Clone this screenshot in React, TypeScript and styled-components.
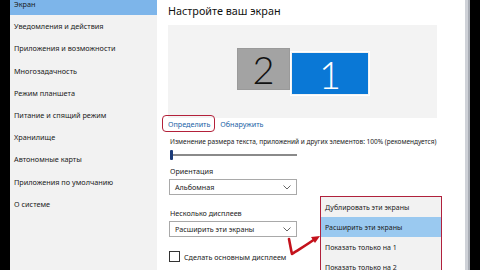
import React from "react";
import styled, { createGlobalStyle } from "styled-components";

const Global = createGlobalStyle`
  html, body { margin: 0; padding: 0; background: #000; }
  body { width: 480px; height: 270px; overflow: hidden; font-family: "Noto Sans", "Open Sans", sans-serif; }
  * { box-sizing: border-box; }
`;

const Screen = styled.div`
  width: 480px;
  height: 270px;
  display: flex;
  position: relative;
  overflow: hidden;
  background: #000;
`;

const Edge = styled.div<{ $w: number }>`
  width: ${(p) => p.$w}px;
  flex: none;
  background: #000;
`;

const Sidebar = styled.nav`
  width: 147px;
  flex: none;
  background: #f2f2f2;
  display: flex;
  flex-direction: column;
`;

const NavItem = styled.div<{ $active?: boolean; $first?: boolean }>`
  height: 22.2px;
  flex: none;
  display: flex;
  align-items: center;
  padding-left: 4px;
  font-size: 7.3px;
  color: #1a1a1a;
  background: ${(p) => (p.$active ? "#7db5ea" : "transparent")};
  margin-top: ${(p) => (p.$first ? "-7px" : "0")};
  white-space: nowrap;
`;

const Main = styled.main`
  flex: 1;
  background: #fff;
  padding-left: 11px;
  display: flex;
  flex-direction: column;
`;

const Title = styled.h1`
  margin: 3px 0 0 0;
  font-size: 10.8px;
  font-weight: 400;
  color: #111;
  height: 16px;
  line-height: 16px;
`;

const Preview = styled.div`
  margin-top: 6px;
  width: 269px;
  height: 93px;
  background: #f3f3f3;
  display: flex;
  justify-content: center;
  align-items: flex-start;
  gap: 2px;
`;

const Monitor = styled.div<{ $primary?: boolean }>`
  display: flex;
  align-items: center;
  justify-content: center;
  width: ${(p) => (p.$primary ? 76 : 53)}px;
  height: ${(p) => (p.$primary ? 41 : 42)}px;
  margin-top: ${(p) => (p.$primary ? 28 : 23)}px;
  background: ${(p) => (p.$primary ? "#0a78d6" : "#a3a3a3")};
  color: ${(p) => (p.$primary ? "#fff" : "#111")};
  border: 1px solid ${(p) => (p.$primary ? "#0a78d6" : "#9a9a9a")};
  outline: ${(p) => (p.$primary ? "1px solid #ffffff" : "none")};
  outline-offset: 1px;
  font-family: Lato, "DejaVu Sans", sans-serif;
  font-weight: 300;
  font-size: 38px;
  line-height: 1;
`;

const LinkRow = styled.div`
  display: flex;
  align-items: center;
  gap: 5px;
  margin-top: -3px;
  margin-left: -6px;
  height: 17px;
`;

const Marked = styled.span`
  display: inline-flex;
  align-items: center;
  height: 17px;
  padding: 0 4px 0 5px;
  border: 1.5px solid #b3213a;
  border-radius: 4px;
`;

const Link = styled.span`
  font-size: 7.2px;
  color: #1a63a6;
  white-space: nowrap;
`;

const Label = styled.div<{ $mt: number; $small?: boolean }>`
  margin-top: ${(p) => p.$mt}px;
  margin-left: 2px;
  font-size: ${(p) => (p.$small ? 6.5 : 7.2)}px;
  color: #222;
  white-space: nowrap;
  height: 10px;
  line-height: 10px;
`;

const Slider = styled.div`
  margin-top: 3px;
  margin-left: 2px;
  width: 127px;
  height: 10px;
  display: flex;
  align-items: center;
  position: relative;
`;

const Track = styled.div`
  flex: 1;
  height: 1.5px;
  background: #8a8a8a;
`;

const Thumb = styled.div`
  position: absolute;
  left: 0;
  top: 0;
  width: 3px;
  height: 10px;
  border-radius: 1px;
  background: #1b3a78;
`;

const Select = styled.div<{ $mt: number }>`
  margin-top: ${(p) => p.$mt}px;
  margin-left: 1px;
  width: 128px;
  height: 16px;
  border: 1px solid #a9a9a9;
  background: #fff;
  display: flex;
  align-items: center;
  justify-content: space-between;
  padding: 0 5px 0 5px;
  font-size: 7.2px;
  color: #222;
`;

const CheckRow = styled.div`
  margin-top: 14px;
  margin-left: 1px;
  display: flex;
  align-items: center;
  gap: 4px;
  font-size: 7.2px;
  color: #222;
`;

const Box = styled.div`
  width: 11px;
  height: 11px;
  border: 1px solid #333;
  background: #fff;
`;

const Scrollbar = styled.div`
  width: 5px;
  flex: none;
  background: #cfd2d8;
  border-right: 2px solid #a9adb5;
`;

const Popup = styled.div`
  position: absolute;
  left: 320px;
  top: 196px;
  width: 122px;
  height: 90px;
  background: #f2f2f2;
  border: 1.5px solid #b0213c;
  display: flex;
  flex-direction: column;
`;

const PopItem = styled.div<{ $sel?: boolean }>`
  height: 20px;
  flex: none;
  display: flex;
  align-items: center;
  padding-left: 4px;
  font-size: 7px;
  color: #1a1a1a;
  white-space: nowrap;
  background: ${(p) => (p.$sel ? "#9ac9f0" : "transparent")};
`;

const ArrowSvg = styled.svg`
  position: absolute;
  left: 282px;
  top: 230px;
  overflow: visible;
`;

const Chevron = () => (
  <svg width="8" height="5" viewBox="0 0 8 5">
    <path d="M0.5 0.5 L4 4 L7.5 0.5" fill="none" stroke="#555" strokeWidth="0.9" />
  </svg>
);

const navItems = [
  "Экран",
  "Уведомления и действия",
  "Приложения и возможности",
  "Многозадачность",
  "Режим планшета",
  "Питание и спящий режим",
  "Хранилище",
  "Автономные карты",
  "Приложения по умолчанию",
  "О системе",
];

const popItems = [
  "Дублировать эти экраны",
  "Расширить эти экраны",
  "Показать только на 1",
  "Показать только на 2",
];

export default function App() {
  return (
    <>
      <Global />
      <Screen>
        <Edge $w={10} />
        <Sidebar>
          {navItems.map((t, i) => (
            <NavItem key={t} $active={i === 0} $first={i === 0}>
              {t}
            </NavItem>
          ))}
        </Sidebar>
        <Main>
          <Title>Настройте ваш экран</Title>
          <Preview>
            <Monitor>2</Monitor>
            <Monitor $primary>1</Monitor>
          </Preview>
          <LinkRow>
            <Marked>
              <Link>Определить</Link>
            </Marked>
            <Link>Обнаружить</Link>
          </LinkRow>
          <Label $mt={5} $small>
            Изменение размера текста, приложений и других элементов: 100% (рекомендуется)
          </Label>
          <Slider>
            <Track />
            <Thumb />
          </Slider>
          <Label $mt={6}>Ориентация</Label>
          <Select $mt={3}>
            <span>Альбомная</span>
            <Chevron />
          </Select>
          <Label $mt={13}>Несколько дисплеев</Label>
          <Select $mt={3}>
            <span>Расширить эти экраны</span>
            <Chevron />
          </Select>
          <CheckRow>
            <Box />
            <span>Сделать основным дисплеем</span>
          </CheckRow>
        </Main>
        <Scrollbar />
        <Edge $w={10} />
        <ArrowSvg width="40" height="30" viewBox="0 0 40 30">
          <path d="M7 9 C8 14, 9 20, 10 24 C16 20, 26 14, 33 9" fill="none" stroke="#c4121c" strokeWidth="2.6" strokeLinecap="round" strokeLinejoin="round" />
          <path d="M38 6 L29 7 L33 13 Z" fill="#c4121c" />
        </ArrowSvg>
        <Popup>
          {popItems.map((t, i) => (
            <PopItem key={t} $sel={i === 1}>
              {t}
            </PopItem>
          ))}
        </Popup>
      </Screen>
    </>
  );
}
